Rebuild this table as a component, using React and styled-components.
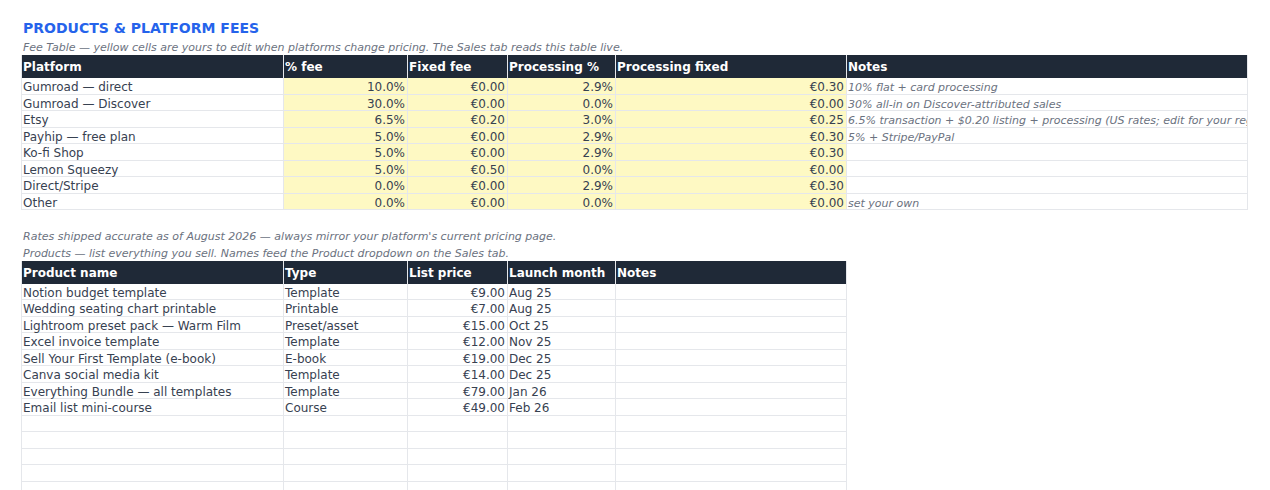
import React from "react";
import styled, { createGlobalStyle } from "styled-components";

const GlobalStyle = createGlobalStyle`
  body {
    margin: 0;
    background: #ffffff;
    font-family: "DejaVu Sans", "Liberation Sans", sans-serif;
    color: #374151;
  }
`;

const Page = styled.div`
  padding: 17px 0 0 21px;
  width: 1249px;
  height: 490px;
  overflow: hidden;
  box-sizing: border-box;
`;

const Title = styled.div`
  height: 21px;
  line-height: 22px;
  padding-left: 2px;
  font-size: 14px;
  font-weight: bold;
  color: #2563eb;
`;

const Caption = styled.div`
  height: 17px;
  box-sizing: border-box;
  padding-top: 1px;
  line-height: 17px;
  padding-left: 2px;
  font-size: 11px;
  font-style: italic;
  color: #6b7280;
  white-space: nowrap;
`;

const Spacer = styled.div`
  height: 16.5px;
`;

const Grid = styled.div`
  display: grid;
  grid-template-columns: ${(p) => p.$cols};
  grid-template-rows: 23px;
  grid-auto-rows: 16.5px;
  border-left: 1px solid #e5e7eb;
  width: max-content;
`;

const HeadCell = styled.div`
  box-sizing: border-box;
  padding: 1px 0 0 1px;
  line-height: 23px;
  font-size: 12px;
  font-weight: bold;
  color: #ffffff;
  background: #1f2937;
  border-right: 1px solid #e5e7eb;
  white-space: nowrap;
  overflow: hidden;
`;

const Cell = styled.div`
  box-sizing: border-box;
  padding: 2px 2px 0 1px;
  line-height: 15px;
  font-size: ${(p) => (p.$note ? "11px" : "12px")};
  font-style: ${(p) => (p.$note ? "italic" : "normal")};
  color: ${(p) => (p.$note ? "#6b7280" : "#374151")};
  text-align: ${(p) => (p.$num ? "right" : "left")};
  background: ${(p) => (p.$edit ? "#fef9c3" : "#ffffff")};
  border-right: 1px solid #e5e7eb;
  border-bottom: 1px solid #e5e7eb;
  white-space: nowrap;
  overflow-x: clip;
  overflow-y: visible;
`;

const feeCols = "262px 124px 100px 108px 231px 401px";
const productCols = "262px 124px 100px 108px 231px";

const feeHead = ["Platform", "% fee", "Fixed fee", "Processing %", "Processing fixed", "Notes"];

const fees = [
  ["Gumroad — direct", "10.0%", "€0.00", "2.9%", "€0.30", "10% flat + card processing"],
  ["Gumroad — Discover", "30.0%", "€0.00", "0.0%", "€0.00", "30% all-in on Discover-attributed sales"],
  ["Etsy", "6.5%", "€0.20", "3.0%", "€0.25", "6.5% transaction + $0.20 listing + processing (US rates; edit for your region)"],
  ["Payhip — free plan", "5.0%", "€0.00", "2.9%", "€0.30", "5% + Stripe/PayPal"],
  ["Ko-fi Shop", "5.0%", "€0.00", "2.9%", "€0.30", ""],
  ["Lemon Squeezy", "5.0%", "€0.50", "0.0%", "€0.00", ""],
  ["Direct/Stripe", "0.0%", "€0.00", "2.9%", "€0.30", ""],
  ["Other", "0.0%", "€0.00", "0.0%", "€0.00", "set your own"],
];

const productHead = ["Product name", "Type", "List price", "Launch month", "Notes"];

// blank rows at the end are left for the user to fill in
const products = [
  ["Notion budget template", "Template", "€9.00", "Aug 25"],
  ["Wedding seating chart printable", "Printable", "€7.00", "Aug 25"],
  ["Lightroom preset pack — Warm Film", "Preset/asset", "€15.00", "Oct 25"],
  ["Excel invoice template", "Template", "€12.00", "Nov 25"],
  ["Sell Your First Template (e-book)", "E-book", "€19.00", "Dec 25"],
  ["Canva social media kit", "Template", "€14.00", "Dec 25"],
  ["Everything Bundle — all templates", "Template", "€79.00", "Jan 26"],
  ["Email list mini-course", "Course", "€49.00", "Feb 26"],
  ["", "", "", ""],
  ["", "", "", ""],
  ["", "", "", ""],
  ["", "", "", ""],
  ["", "", "", ""],
];

const FeeTable = () => (
  <Grid $cols={feeCols}>
    {feeHead.map((h) => (
      <HeadCell key={h}>{h}</HeadCell>
    ))}
    {fees.map((row) =>
      row.map((v, i) => (
        <Cell
          key={row[0] + i}
          $num={i >= 1 && i <= 4}
          $edit={i >= 1 && i <= 4}
          $note={i === 5}
        >
          {v}
        </Cell>
      ))
    )}
  </Grid>
);

const ProductTable = () => (
  <Grid $cols={productCols}>
    {productHead.map((h) => (
      <HeadCell key={h}>{h}</HeadCell>
    ))}
    {products.map((row, r) =>
      [...row, ""].map((v, i) => (
        <Cell key={r + "-" + i} $num={i === 2}>
          {v}
        </Cell>
      ))
    )}
  </Grid>
);

export default function App() {
  return (
    <>
      <GlobalStyle />
      <Page>
        <Title>PRODUCTS &amp; PLATFORM FEES</Title>
        <Caption>
          Fee Table — yellow cells are yours to edit when platforms change pricing. The Sales tab reads this table live.
        </Caption>
        <FeeTable />
        <Spacer />
        <Caption>
          Rates shipped accurate as of August 2026 — always mirror your platform's current pricing page.
        </Caption>
        <Caption>
          Products — list everything you sell. Names feed the Product dropdown on the Sales tab.
        </Caption>
        <ProductTable />
      </Page>
    </>
  );
}
